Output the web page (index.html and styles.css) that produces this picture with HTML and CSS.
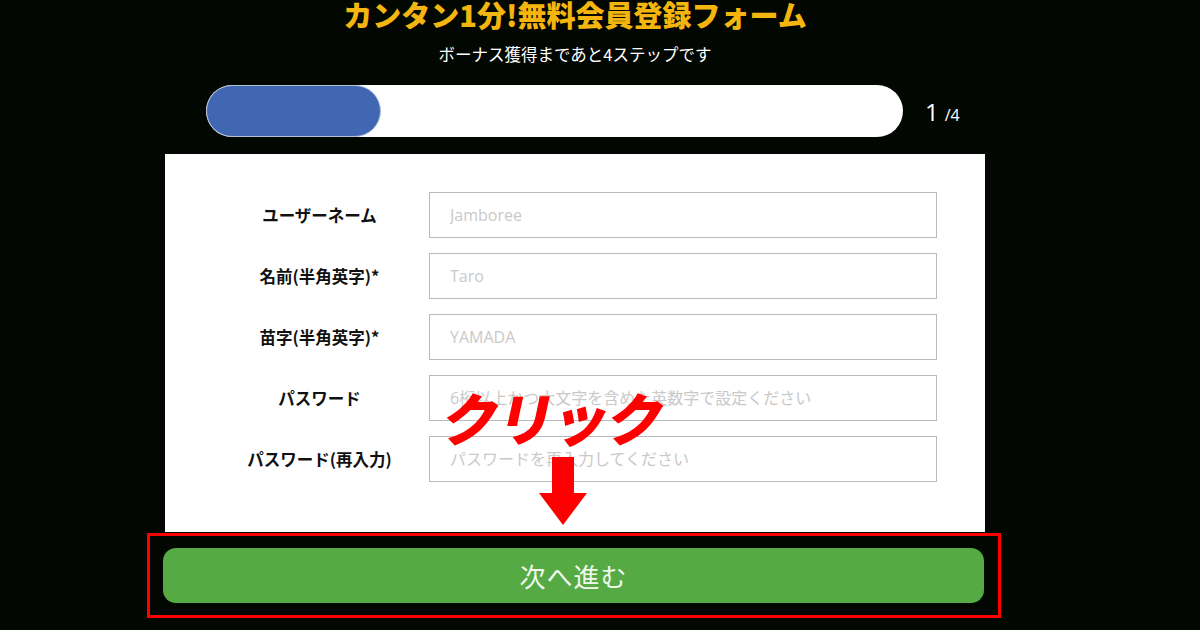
FILE: index.html
```html
<!DOCTYPE html>
<html lang="ja">
<head>
<meta charset="utf-8">
<title>無料会員登録フォーム</title>
<link rel="stylesheet" href="styles.css">
</head>
<body>
<div class="page">
  <h1 class="title">カンタン1分!無料会員登録フォーム</h1>
  <p class="lead">ボーナス獲得まであと4ステップです</p>
  <div class="progress">
    <div class="track"><div class="fill" style="width:175px"></div></div>
    <div class="step"><span class="cur">1</span><span class="tot">/4</span></div>
  </div>
  <div class="card">
    <div class="form">
      <label class="label">ユーザーネーム</label>
      <input class="field" type="text" placeholder="Jamboree">
      <label class="label">名前(半角英字)*</label>
      <input class="field" type="text" placeholder="Taro">
      <label class="label">苗字(半角英字)*</label>
      <input class="field" type="text" placeholder="YAMADA">
      <label class="label">パスワード</label>
      <input class="field" type="password" placeholder="6桁以上かつ大文字を含めた英数字で設定ください">
      <label class="label">パスワード(再入力)</label>
      <input class="field" type="password" placeholder="パスワードを再入力してください">
    </div>
    <div class="click-note">クリック</div>
    <svg class="click-arrow" width="48" height="68" viewBox="0 0 48 68" aria-hidden="true">
      <rect x="13" y="0" width="22" height="37" fill="#ff0000"/>
      <polygon points="0,36 48,36 24,68" fill="#ff0000"/>
    </svg>
  </div>
  <div class="cta-frame">
    <button class="cta" type="button">次へ進む</button>
  </div>
</div>
</body>
</html>
```
FILE: styles.css
```css
html, body {
  margin: 0;
  padding: 0;
}
body {
  background: #020702;
  font-family: "Noto Sans CJK JP", "Noto Sans", sans-serif;
  width: 1200px;
  height: 630px;
  overflow: hidden;
}
.page {
  width: 820px;
  margin-left: 165px;
  padding-top: 1px;
}
.title {
  margin: 0;
  height: 27px;
  line-height: 27px;
  font-size: 29px;
  font-weight: 900;
  color: #f5b50f;
  text-align: center;
  white-space: nowrap;
}
.lead {
  margin: 14px 0 0;
  line-height: 24px;
  font-size: 16.5px;
  color: #ffffff;
  text-align: center;
}
.progress {
  margin-top: 19px;
  padding-left: 41px;
  display: flex;
  align-items: center;
  gap: 22px;
}
.track {
  width: 697px;
  height: 52px;
  background: #ffffff;
  border-radius: 26px;
  overflow: hidden;
}
.fill {
  height: 100%;
  box-sizing: border-box;
  background: #4267b2;
  border: 1px solid #b3c0d8;
  border-radius: 26px;
}
.step {
  color: #ffffff;
  font-family: "Open Sans", "Noto Sans", sans-serif;
  white-space: nowrap;
}
.cur {
  font-size: 24px;
  margin-right: 6px;
}
.tot {
  font-size: 16px;
}
.card {
  position: relative;
  margin-top: 17px;
  background: #ffffff;
  padding: 38px 48px 50px 45px;
}
.form {
  display: grid;
  grid-template-columns: 219px 1fr;
  row-gap: 15px;
  align-items: center;
}
.label {
  text-align: center;
  font-size: 16.5px;
  font-weight: 700;
  color: #111111;
  white-space: nowrap;
}
.field {
  box-sizing: border-box;
  height: 46px;
  width: 100%;
  margin: 0;
  padding: 0 20px;
  border: 1px solid #b9b9b9;
  border-radius: 0;
  background: #ffffff;
  font-family: "Open Sans", "Noto Sans CJK JP", sans-serif;
  font-size: 16px;
  color: #333333;
  outline: none;
}
.field::placeholder {
  color: #c9c9c9;
}
.click-note {
  position: absolute;
  left: 279px;
  top: 234px;
  font-size: 57px;
  line-height: 1;
  font-weight: 900;
  color: #ff0000;
  transform: skewX(-12deg);
  white-space: nowrap;
  letter-spacing: -2px;
}
.click-arrow {
  position: absolute;
  left: 374px;
  top: 303px;
}
.cta-frame {
  margin: 1px -16px 0 -18px;
  border: 3px solid #ff0000;
  padding: 12px 14px 12px 13px;
}
.cta {
  display: block;
  width: 100%;
  height: 55px;
  border: none;
  border-radius: 13px;
  background: #55aa44;
  color: #f0f8ec;
  font-family: "Noto Sans CJK JP", sans-serif;
  font-size: 26px;
  font-weight: 400;
  letter-spacing: 1px;
  cursor: pointer;
}
```
